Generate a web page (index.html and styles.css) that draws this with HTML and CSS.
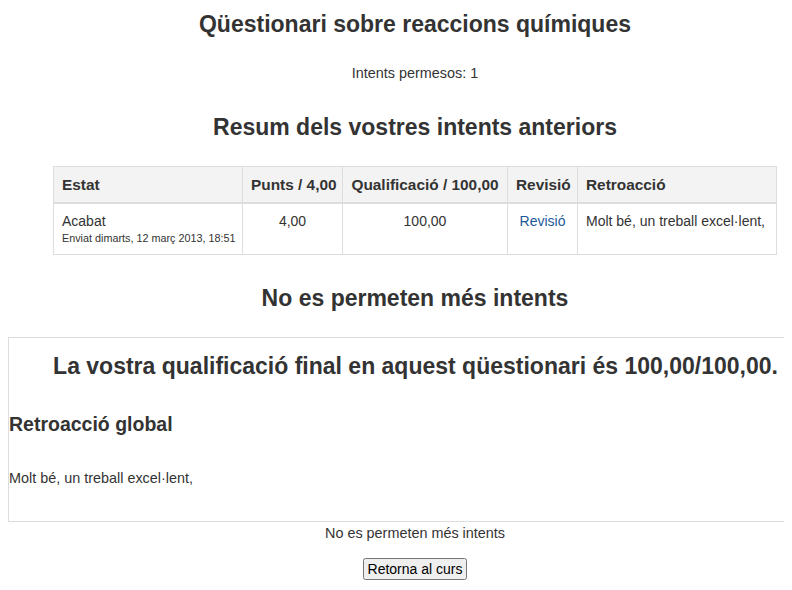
FILE: index.html
```html
<!DOCTYPE html>
<html lang="ca">
<head>
    <meta charset="UTF-8">
    <title>Qüestionari sobre reaccions químiques</title>
    <link rel="stylesheet" href="styles.css">
</head>
<body>

    <div class="page">
        <h2 class="quiz-title">Qüestionari sobre reaccions químiques</h2>
        <p class="quiz-info">Intents permesos: 1</p>

        <h2 class="summary-title">Resum dels vostres intents anteriors</h2>
        <table class="attempts">
            <thead>
                <tr>
                    <th class="col-state">Estat</th>
                    <th class="col-marks">Punts / 4,00</th>
                    <th class="col-grade">Qualificació / 100,00</th>
                    <th class="col-review">Revisió</th>
                    <th class="col-feedback">Retroacció</th>
                </tr>
            </thead>
            <tbody>
                <tr>
                    <td class="col-state">Acabat<span class="state-date">Enviat dimarts, 12 març 2013, 18:51</span></td>
                    <td class="col-marks">4,00</td>
                    <td class="col-grade">100,00</td>
                    <td class="col-review"><a href="#">Revisió</a></td>
                    <td class="col-feedback">Molt bé, un treball excel·lent,</td>
                </tr>
            </tbody>
        </table>

        <h2 class="no-more">No es permeten més intents</h2>

        <div class="feedback-box">
            <h2 class="final-grade">La vostra qualificació final en aquest qüestionari és 100,00/100,00.</h2>
            <h3 class="overall-title">Retroacció global</h3>
            <p class="overall-text">Molt bé, un treball excel·lent,</p>
        </div>

        <p class="no-more-text">No es permeten més intents</p>
        <div class="continue">
            <button type="button" class="continue-btn">Retorna al curs</button>
        </div>
    </div>

</body>
</html>
```

FILE: styles.css
```css
html {
    overflow: hidden;
}

body {
    margin: 8px;
    font-family: "Liberation Sans", Arial, sans-serif;
    font-size: 14.4px;
    line-height: 20px;
    color: #333333;
    background-color: #ffffff;
}

.page {
    width: 814px; /* Inhalt ist breiter als das Fenster */
    text-align: center;
}

h2 {
    font-size: 23px;
    line-height: 30px;
    font-weight: bold;
    margin: 0;
}

p {
    margin: 0;
}

.quiz-title {
    margin-top: 1px;
}

.quiz-info {
    margin-top: 24px;
}

.summary-title {
    margin-top: 29px;
}

/* Tabelle der Versuche */
.attempts {
    width: 724px;
    table-layout: fixed;
    margin: 24px auto 0;
    border-collapse: collapse;
    border: 1px solid #dddddd;
    font-size: 14px;
    text-align: left;
}

.attempts th,
.attempts td {
    border: 1px solid #dddddd;
    padding: 8px;
    vertical-align: top;
    white-space: nowrap;
}

.attempts th {
    background-color: #f3f3f3;
    border-bottom-width: 2px;
    font-size: 15.4px;
    line-height: 19px;
}

.attempts td {
    line-height: 18px;
}

.attempts .col-state { width: 172px; }
.attempts .col-marks { width: 83px; text-align: center; }
.attempts .col-grade { width: 148px; text-align: center; }
.attempts .col-review { width: 53px; text-align: center; }
.attempts .col-feedback { width: 182px; }

.state-date {
    display: block;
    margin-top: 1px;
    font-size: 10.8px;
    line-height: 15px;
}

.attempts a {
    color: #1c5a97;
    text-decoration: none;
}

.no-more {
    margin-top: 28px;
}

/* Box mit Endnote */
.feedback-box {
    margin: 24px -60px 0 0; /* rechter Rand läuft aus dem Fenster */
    border: 1px solid #dddddd;
    border-right: none;
    padding: 13px 60px 33px 0;
    text-align: left;
}

.final-grade {
    text-align: center;
}

.overall-title {
    font-size: 19.5px;
    line-height: 24px;
    margin: 31px 0 0;
}

.overall-text {
    margin-top: 32px;
}

.no-more-text {
    margin-top: 1px;
}

.continue {
    margin-top: 15px;
}

.continue-btn {
    font-family: "Liberation Sans", Arial, sans-serif;
    font-size: 14px;
    padding: 1px 3px;
    color: #000000;
}
```
